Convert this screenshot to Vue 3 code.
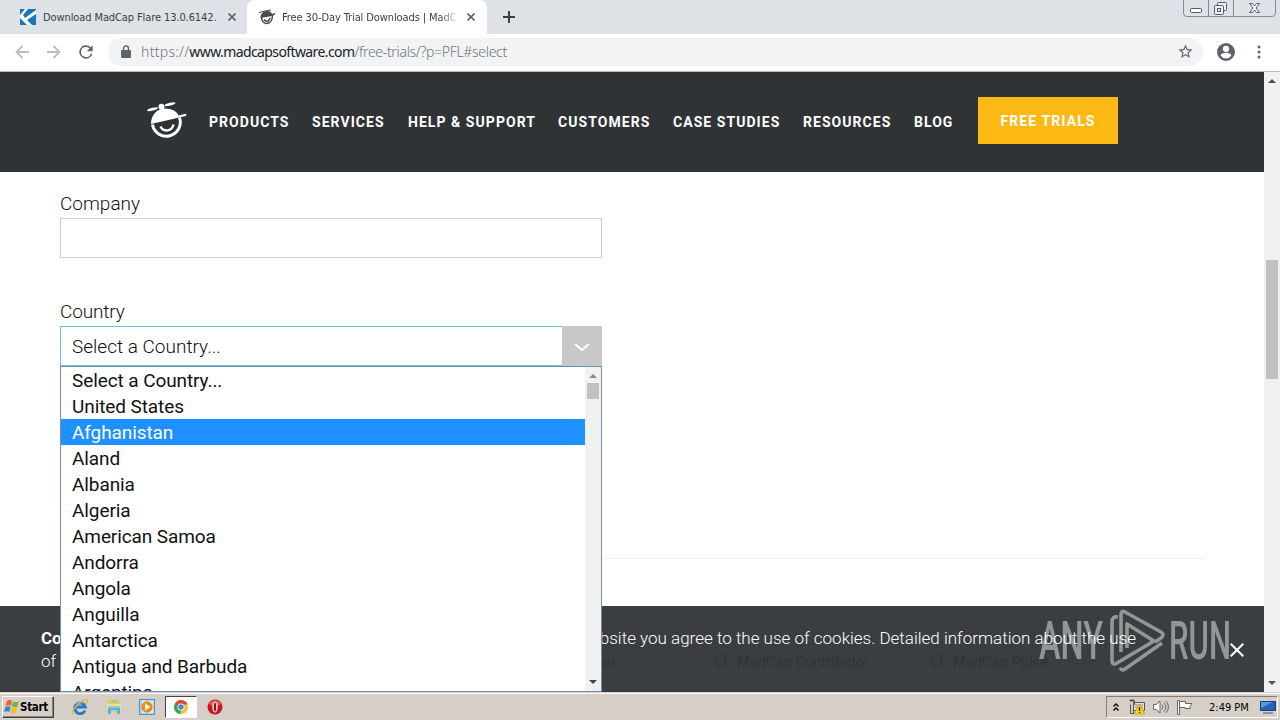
<script setup>
import { ref } from 'vue'

const navItems = [
  { text: 'PRODUCTS', width: 103 },
  { text: 'SERVICES', width: 96 },
  { text: 'HELP & SUPPORT', width: 150 },
  { text: 'CUSTOMERS', width: 115 },
  { text: 'CASE STUDIES', width: 130 },
  { text: 'RESOURCES', width: 111 },
  { text: 'BLOG', width: 64 }
]

const countries = [
  'Select a Country...',
  'United States',
  'Afghanistan',
  'Aland',
  'Albania',
  'Algeria',
  'American Samoa',
  'Andorra',
  'Angola',
  'Anguilla',
  'Antarctica',
  'Antigua and Barbuda',
  'Argentina'
]
const hovered = ref('Afghanistan')
const company = ref('')
</script>

<template>
  <div class="screen">
    <!-- tab strip -->
    <div class="tabs">
      <div class="tab tab-first">
        <svg class="favicon" viewBox="0 0 16 16">
          <rect width="16" height="16" fill="#fff"/>
          <path d="M0 0h5L0 6zM8 0h8v1L5 9 3 6zM0 9l7 7H0zM16 5v11h-4l-5-5z" fill="#1679b5"/>
        </svg>
        <span class="tab-title">Download MadCap Flare 13.0.6142.</span>
        <svg class="tab-close" viewBox="0 0 8 8"><path d="M.5.5l7 7M7.5.5l-7 7"/></svg>
      </div>
      <div class="tab tab-active">
        <svg class="favicon" viewBox="0 0 16 16" fill="none" stroke="#4b4b4b">
          <path d="M0 3.500l6-1.500L12 1" stroke-width="1.200"/>
          <path d="M1.500 9C1 1 12 0 13 5l3-1v1.500L13 7z" fill="#4b4b4b" stroke="none"/>
          <path d="M2.500 8c0 9 11 9 11-2M5 10.500c2 3 5 2 6-1.500" stroke-width="1.500"/>
        </svg>
        <span class="tab-title fade">Free 30-Day Trial Downloads | MadC</span>
        <svg class="tab-close" viewBox="0 0 8 8"><path d="M.5.5l7 7M7.5.5l-7 7"/></svg>
      </div>
      <svg class="new-tab" viewBox="0 0 12 12"><path d="M6 0v12M0 6h12"/></svg>
      <svg class="win-buttons" viewBox="0 0 94 18" fill="none" stroke="#85898f">
        <path d="M.5 0v13q0 3.500 3.500 3.500h85q3.500 0 3.500-3.500V0M25.500 0v16M50.500 0v16"/>
        <rect x="7.500" y="8.500" width="11" height="4" rx="1" fill="#fff" stroke="#555a64"/>
        <g stroke="#555a64" fill="#eef0f3">
          <rect x="34.500" y="2.500" width="9" height="8" rx="1"/>
          <rect x="31.500" y="5.500" width="9" height="9" rx="1"/>
          <rect x="34.500" y="8.500" width="3" height="3"/>
        </g>
        <path d="M66.500 3.500h3l2 2.500 2-2.500h3l-3.500 4.500 3.500 4.500h-3l-2-2.500-2 2.500h-3l3.500-4.500z" fill="#fff" stroke="#555a64"/>
      </svg>
    </div>

    <!-- address bar -->
    <div class="toolbar">
      <svg class="tool-icon back" viewBox="0 0 14 14"><path d="M14 7H1.500M7.500 1l-6 6 6 6"/></svg>
      <svg class="tool-icon forward" viewBox="0 0 14 14"><path d="M0 7h12.500M6.500 1l6 6-6 6"/></svg>
      <svg class="tool-icon reload" viewBox="0 0 24 24">
        <path d="M17.650 6.350A8 8 0 1 0 19.730 14h-2.080A6 6 0 1 1 12 6c1.660 0 3.140.690 4.220 1.780L13 11h7V4z"/>
      </svg>
      <div class="omnibox">
        <svg class="lock" viewBox="0 0 10 13">
          <rect y="5" width="10" height="8" rx="1" fill="#5f6368"/>
          <path d="M2.500 5.500V3.500a2.500 2.500 0 0 1 5 0v2" fill="none" stroke="#5f6368" stroke-width="1.400"/>
        </svg>
        <span class="url"><i>https://</i><b>www.madcapsoftware.com</b>/free-trials/?p=PFL#select</span>
        <svg class="star" viewBox="0 0 24 24">
          <path d="M22 9.240l-7.190-.620L12 2 9.190 8.630 2 9.240l5.460 4.730L5.820 21 12 17.270 18.180 21l-1.630-7.030zM12 15.400l-3.760 2.270 1-4.280-3.320-2.880 4.380-.380L12 6.100l1.710 4.040 4.380.380-3.320 2.880 1 4.280z"/>
        </svg>
      </div>
      <svg class="avatar" viewBox="2 2 20 20">
        <path d="M12 2a10 10 0 1 0 0 20 10 10 0 0 0 0-20zm0 3a3.500 3.500 0 1 1 0 7 3.500 3.500 0 0 1 0-7zm0 14.200a7.200 7.200 0 0 1-6-3.220c.03-1.990 4-3.080 6-3.080s5.970 1.090 6 3.080a7.200 7.200 0 0 1-6 3.220z"/>
      </svg>
      <svg class="menu" viewBox="0 0 4 14"><circle cx="2" cy="2" r="1.500"/><circle cx="2" cy="7" r="1.500"/><circle cx="2" cy="12" r="1.500"/></svg>
    </div>

    <!-- page -->
    <div class="viewport">
      <div class="page">
        <header class="site-header">
          <svg class="logo" viewBox="0 0 40 38">
            <g fill="#fff">
              <ellipse cx="5.500" cy="7.200" rx="5.500" ry="1.400" transform="rotate(-14 5.500 7.200)"/>
              <ellipse cx="23" cy="2.200" rx="5.500" ry="1.400" transform="rotate(-14 23 2.200)"/>
              <circle cx="14.500" cy="4.800" r="3"/>
              <path d="M4 22C4 13 10 6.700 18 6.500c7 0 12 3 13.500 7l7-1.700q1.700.5.300 2.200z"/>
            </g>
            <g fill="none" stroke="#fff">
              <path d="M5.500 22.500a14 14 0 1 0 27-7" stroke-width="3"/>
              <path d="M13.500 24.500c3 6 11.500 5 13-2" stroke-width="2.400"/>
            </g>
          </svg>
          <nav>
            <a v-for="item in navItems" :key="item.text" :style="{ width: item.width + 'px' }">{{ item.text }}</a>
          </nav>
          <a class="trial">FREE TRIALS</a>
        </header>

        <main class="form">
          <label>Company</label>
          <input v-model="company" type="text">
          <label class="second">Country</label>
          <div class="select">
            <span>Select a Country...</span>
            <i><svg viewBox="0 0 16 8"><path d="M1 1l7 6 7-6"/></svg></i>
          </div>
          <hr>
          <div class="products">
            <span class="lingo">MadCap Lingo</span>
            <span class="radio contributor"><i></i>MadCap Contributor</span>
            <span class="radio"><i></i>MadCap Pulse</span>
          </div>
        </main>

        <div class="cookies">
          <p><b>Cookies</b> <span>website you agree to the use of cookies. Detailed information about the use</span></p>
          <p>of</p>
          <svg class="cookie-close" viewBox="0 0 14 14"><path d="M.7.7l12.600 12.600M13.300.7L.7 13.300"/></svg>
        </div>

        <div class="dropdown">
          <ul>
            <li v-for="country in countries" :key="country" :class="{ hovered: country === hovered }" @mouseenter="hovered = country">{{ country }}</li>
          </ul>
          <div class="list-scroll">
            <svg viewBox="0 0 8 4"><path d="M0 4l4-4 4 4z" fill="#8b8b8b"/></svg>
            <div class="list-thumb"></div>
            <svg class="down" viewBox="0 0 8 4"><path d="M0 0l4 4 4-4z" fill="#444"/></svg>
          </div>
        </div>

        <svg class="watermark" viewBox="0 0 196 64">
          <g fill="#fff" font-family="'Roboto', sans-serif" font-size="53" font-weight="500">
            <text x="0" y="49.500" textLength="64" lengthAdjust="spacingAndGlyphs">ANY</text>
            <text x="130" y="49.500" textLength="62" lengthAdjust="spacingAndGlyphs">RUN</text>
          </g>
          <g fill="none" stroke="#fff" stroke-width="3.600" stroke-linejoin="round">
            <path d="M79 8q-6-1-6 5v38q0 6 5 3l37-22L88 15v24"/>
            <path d="M82 43V6q0-5 4-3l36 20q4 3 0 6l-6 4"/>
            <path d="M123 34L86 60q-3 2-5-1"/>
          </g>
        </svg>
      </div>
      <div class="page-scroll">
        <svg viewBox="0 0 8 4"><path d="M0 4l4-4 4 4z" fill="#505050"/></svg>
        <div class="page-thumb"></div>
        <svg class="down" viewBox="0 0 8 4"><path d="M0 0l4 4 4-4z" fill="#505050"/></svg>
      </div>
    </div>

    <!-- taskbar -->
    <footer class="taskbar">
      <button class="start">
        <svg viewBox="0 0 16 16">
          <path d="M3 2q3-2 5 0L7 7Q4 5 1.500 7z" fill="#e8622c"/>
          <path d="M9 2.500q3 1.500 6-.5l-1.500 5.500q-3 1.500-5.500 0z" fill="#78b532"/>
          <path d="M1.300 8Q4 6.500 6.700 8l-1.500 5Q3 11.500 0 13z" fill="#3a86d4"/>
          <path d="M7.700 8.500q3 1.500 5.500 0L11.800 13.500q-3 2-5.500 0z" fill="#f3bd21"/>
        </svg>
        Start
      </button>
      <div class="quick">
        <svg viewBox="0 0 16 16" fill="none">
          <path d="M13 11.500A5.300 5.300 0 1 1 13.300 8H4" stroke="#1f7fcb" stroke-width="3"/>
          <path d="M4 5.500q4-4 7-1" stroke="#73c8ee"/>
          <path d="M1 15C-2 11 12-1 15.500 1q1 1-1.500 4" stroke="#e5b72c" stroke-width="1.300"/>
        </svg>
      </div>
      <div class="quick">
        <svg viewBox="0 0 16 16">
          <path d="M1 3l1-2h4l1 2h7v10H1z" fill="#e8cb68"/>
          <path d="M5 1h7v3H5z" fill="#a9cf80"/>
          <path d="M1 5h14v6H1z" fill="#f5e08a"/>
          <path d="M2 15V9q0-2 2-2h8q2 0 2 2v6h-3v-4H5v4z" fill="#58b3e0"/>
          <path d="M3 8h10" stroke="#b8e5f6"/>
        </svg>
      </div>
      <div class="quick">
        <svg viewBox="0 0 16 16">
          <rect x=".5" y=".5" width="15" height="15" fill="#a9d5ef" stroke="#5191c1"/>
          <rect x="3" y="2" width="11" height="12" fill="#d6effb"/>
          <circle cx="8" cy="8" r="5.700" fill="#f28a15"/>
          <path d="M6 4.500v7L11.500 8z" fill="#fff"/>
        </svg>
      </div>
      <div class="quick running">
        <svg viewBox="0 0 16 16">
          <circle cx="8" cy="8" r="7" fill="#f0c22c"/>
          <path d="M8 8L1.900 4.500A7 7 0 0 0 7.500 15z" fill="#35a853"/>
          <path d="M2 4.500A7 7 0 0 1 14.500 5.500H8L5.500 9z" fill="#df4637"/>
          <circle cx="8" cy="8" r="3.500" fill="#fff"/>
          <circle cx="8" cy="8" r="2.700" fill="#4385ec"/>
        </svg>
      </div>
      <div class="quick">
        <svg viewBox="0 0 16 16">
          <circle cx="8" cy="8" r="7.500" fill="#c7151c"/>
          <path d="M2 5a7 7 0 0 1 12 0q-6 4-12 0z" fill="#e8615f"/>
          <ellipse cx="8" cy="8" rx="2.700" ry="5.500" fill="#f4d9d7"/>
          <ellipse cx="8" cy="8" rx="1.100" ry="4.500" fill="#8f1014"/>
        </svg>
      </div>
      <div class="tray">
        <svg class="chevrons" viewBox="0 0 6 8" fill="none" stroke="#000" stroke-width="1.300"><path d="M.5 3.500L3 1l2.500 2.500M.5 7.500L3 5l2.500 2.500"/></svg>
        <svg class="net" viewBox="0 0 16 16">
          <path d="M4.500 3.500h11v8h-11z" fill="#e4e4df" stroke="#555"/>
          <path d="M6 5h8v5H6z" fill="#b8b8b0"/>
          <path d="M.5 1.500h5v4h-1v9M1.500 5.500v9h5M2 0v3M4 0v3" fill="none" stroke="#555"/>
          <path d="M10.500 5L16 15H5z" fill="#f5d20a" stroke="#c79a00" stroke-width=".6"/>
          <path d="M10.500 8v4M10.500 13v1" stroke="#222" stroke-width="1.200"/>
        </svg>
        <svg class="sound" viewBox="0 0 16 14" fill="none" stroke="#6a6a6a">
          <path d="M.5 4.500h2.500L7 1v12L3 9.500H.5z" fill="#fff"/>
          <path d="M9 4.500q2 2.500 0 5M11 2.500q4 4.500 0 9M13 1q5 6 0 12"/>
        </svg>
        <svg class="flag" viewBox="0 0 16 15" fill="#fff" stroke="#666">
          <path d="M.5.5h2v14h-2z"/><path d="M2.500 1.500h6v2h6.500l-2 3 0 2h-5v-1H2.500z"/>
        </svg>
        <span class="clock">2:49 PM</span>
        <svg class="monitor" viewBox="0 0 16 13">
          <path d="M.5.5h15v9H.5z" fill="#2364b9" stroke="#173f79"/>
          <path d="M1 1h12L1 7z" fill="#5799de"/>
          <path d="M3 12h10" stroke="#6c8199" stroke-width="1.500"/>
        </svg>
      </div>
    </footer>
  </div>
</template>

<style>
body {
  overflow: hidden;
}
</style>

<style scoped>
* {
  box-sizing: border-box;
}

.screen {
  width: 1280px;
  height: 720px;
  display: flex;
  flex-direction: column;
  overflow: hidden;
  background: #fff;
  font-family: Roboto, sans-serif;
}

svg {
  display: block;
  flex-shrink: 0;
}

/* tab strip */
.tabs {
  display: flex;
  height: 34px;
  background: #dee1e6;
  font: 11px "DejaVu Sans Condensed", "DejaVu Sans", sans-serif;
  font-stretch: condensed;
  color: #3c4043;
}

.tab {
  display: flex;
  align-items: center;
  height: 34px;
}

.tab-first {
  width: 247px;
  padding-left: 20px;
}

.tab-active {
  width: 240px;
  padding-left: 12px;
  background: #fff;
  border-radius: 8px 8px 0 0;
}

.favicon {
  width: 16px;
  height: 16px;
}

.tab-title {
  width: 177px;
  margin: 0 8px 0 7px;
  white-space: nowrap;
  overflow: hidden;
  letter-spacing: -0.1px;
}

.fade {
  mask-image: linear-gradient(90deg, #000 158px, transparent 177px);
}

.tab-close {
  width: 8px;
  height: 8px;
  stroke: #5f6368;
  stroke-width: 1.6;
}

.new-tab {
  width: 12px;
  height: 12px;
  margin: 11px 0 0 16px;
  stroke: #3c4043;
  stroke-width: 2;
}

.win-buttons {
  width: 94px;
  height: 18px;
  margin: 0 3px 0 auto;
}

/* address bar */
.toolbar {
  display: flex;
  align-items: center;
  height: 38px;
  padding: 0 18px 2px 15px;
  border-bottom: 1px solid #b9bbbe;
}

.tool-icon {
  width: 14px;
  height: 14px;
  fill: none;
  stroke: #babcbe;
  stroke-width: 1.8;
}

.forward {
  margin-left: 18px;
}

.tool-icon.reload {
  width: 20px;
  height: 20px;
  margin-left: 15px;
  fill: #5f6368;
  stroke: none;
}

.omnibox {
  display: flex;
  align-items: center;
  width: 1095px;
  height: 28px;
  margin-left: 12px;
  padding: 0 9px 0 13px;
  border-radius: 14px;
  background: #f1f3f4;
}

.lock {
  width: 10px;
  height: 13px;
}

.url {
  margin-left: 10px;
  font: 300 14px "Noto Sans", sans-serif;
  letter-spacing: -0.32px;
  color: #6f757a;
}

.url i {
  font-style: normal;
  letter-spacing: 0.3px;
}

.url b {
  font-weight: 400;
  letter-spacing: -0.6px;
  color: #202124;
}

.star {
  width: 17px;
  height: 17px;
  margin-left: auto;
  fill: #5f6368;
}

.avatar {
  width: 18px;
  height: 18px;
  margin-left: 14px;
  fill: #5f6368;
}

.menu {
  width: 4px;
  height: 14px;
  margin-left: 22px;
  fill: #5f6368;
}

/* page */
.viewport {
  display: flex;
  height: 620px;
}

.page {
  position: relative;
  width: 1264px;
  height: 620px;
  overflow: hidden;
}

.site-header {
  display: flex;
  align-items: center;
  height: 100px;
  padding-left: 147px;
  background: #2f3336;
  color: #fff;
  font-size: 14px;
  font-weight: 700;
}

.logo {
  width: 40px;
  height: 38px;
  margin-top: -2px;
}

nav {
  display: flex;
  margin-left: 22px;
  letter-spacing: 1.05px;
}

nav a {
  white-space: nowrap;
}

.trial {
  width: 140px;
  height: 47px;
  margin: -3px 0 0 0;
  background: #fdb913;
  line-height: 48px;
  text-align: center;
  letter-spacing: 1.1px;
}

.form {
  display: flex;
  flex-direction: column;
  padding: 17px 59px 0 60px;
  font-size: 19px;
  font-weight: 300;
  color: #111;
}

.form label {
  height: 29px;
  line-height: 30px;
}

.form .second {
  margin-top: 39px;
  letter-spacing: -0.15px;
}

.form input {
  width: 542px;
  height: 40px;
  border: 1px solid #ccc;
  outline: none;
}

.select {
  display: flex;
  justify-content: space-between;
  width: 542px;
  height: 40px;
  padding-left: 11px;
  border: 1px solid #67c5c5;
  border-right: none;
  line-height: 40px;
}

.select i {
  display: flex;
  align-items: center;
  justify-content: center;
  width: 40px;
  height: 40px;
  margin-top: -1px;
  background: #c8c8c8;
}

.select i svg {
  width: 16px;
  height: 8px;
  margin-top: 2px;
  fill: none;
  stroke: #fff;
  stroke-width: 2;
}

hr {
  width: 100%;
  height: 1px;
  margin: 192px 0 0;
  border: none;
  background: #eee;
}

.products {
  display: flex;
  align-items: center;
  margin-top: 91px;
  height: 24px;
  font-size: 14.7px;
  font-weight: 400;
  color: #000;
  opacity: 0.75;
}

.lingo {
  width: 555px;
  text-align: right;
}

.radio {
  display: flex;
  align-items: center;
  white-space: nowrap;
}

.radio i {
  width: 13px;
  height: 13px;
  margin: -3px 10px 0 0;
  border: 2px solid #555;
  border-radius: 50%;
}

.contributor {
  width: 216px;
  margin-left: 99px;
}

.cookies {
  position: absolute;
  left: 0;
  right: 0;
  bottom: 0;
  height: 86px;
  padding: 21px 0 0 41px;
  background: rgba(47, 51, 54, 0.945);
  color: #fff;
  font-size: 17px;
  font-weight: 300;
  line-height: 23px;
}

.cookies p {
  display: flex;
  justify-content: space-between;
  width: 1095px;
  margin: 0;
  white-space: nowrap;
}

.cookies b {
  font-weight: 700;
}

.cookie-close {
  position: absolute;
  left: 1230px;
  top: 37px;
  width: 14px;
  height: 14px;
  stroke: #fff;
  stroke-width: 2;
}

.dropdown {
  position: absolute;
  left: 60px;
  top: 294px;
  display: flex;
  width: 542px;
  height: 326px;
  border: 1px solid #6d91b5;
  background: #fff;
  overflow: hidden;
}

.dropdown ul {
  flex: 1;
  margin: 0;
  padding: 0;
  list-style: none;
  font-size: 19px;
  letter-spacing: -0.09px;
  color: #111;
}

.dropdown li {
  height: 26px;
  padding-left: 11px;
  line-height: 28px;
}

.dropdown .hovered {
  background: #1e90ff;
  color: #fff;
}

.list-scroll,
.page-scroll {
  display: flex;
  flex-direction: column;
  align-items: center;
  width: 16px;
  padding: 7px 0;
  background: #f1f1f1;
}

.list-scroll svg,
.page-scroll svg {
  width: 8px;
  height: 4px;
}

.list-scroll .down,
.page-scroll .down {
  margin-top: auto;
}

.list-thumb {
  width: 12px;
  height: 16px;
  margin-top: 5px;
  background: #c1c1c1;
}

.page-thumb {
  width: 12px;
  height: 119px;
  margin-top: 177px;
  background: #c1c1c1;
}

.watermark {
  position: absolute;
  left: 1039px;
  top: 537px;
  width: 196px;
  height: 64px;
  opacity: 0.45;
}

/* taskbar */
.taskbar {
  display: flex;
  height: 28px;
  padding-top: 3px;
  border-top: 1px solid #d5cfc7;
  box-shadow: inset 0 1px #fff;
  background: #d5cfc7;
  font-family: "DejaVu Sans Condensed", "DejaVu Sans", sans-serif;
  font-stretch: condensed;
}

.start {
  display: flex;
  align-items: center;
  width: 52px;
  height: 22px;
  margin: 0 10px 0 2px;
  padding: 0 1px;
  border: 1px solid;
  border-color: #fff #444 #444 #fff;
  box-shadow: inset -1px -1px #8a857d;
  background: #d5cfc7;
  color: #000;
  font: bold 11.5px "DejaVu Sans Condensed", "DejaVu Sans", sans-serif;
  font-stretch: condensed;
  letter-spacing: -0.3px;
}

.start svg {
  width: 16px;
  height: 16px;
}

.quick {
  display: flex;
  align-items: center;
  justify-content: center;
  width: 32px;
  height: 22px;
  margin-right: 1.7px;
}

.quick svg {
  width: 16px;
  height: 16px;
}

.running {
  border: 1px solid;
  border-color: #444 #fff #fff #444;
  background: #fff;
}

.tray {
  display: flex;
  align-items: center;
  width: 172px;
  height: 22px;
  margin: 0 2px 0 auto;
  padding-left: 6px;
  border: 1px solid;
  border-color: #827d76 #fff #fff #827d76;
}

.chevrons {
  width: 6px;
  height: 8px;
}

.net {
  width: 16px;
  height: 16px;
  margin-left: 10px;
}

.sound {
  width: 16px;
  height: 14px;
  margin-left: 8px;
}

.flag {
  width: 16px;
  height: 15px;
  margin-left: 8px;
}

.clock {
  width: 51px;
  margin-left: 16px;
  font-size: 11px;
  color: #000;
  white-space: nowrap;
}

.monitor {
  width: 16px;
  height: 13px;
}
</style>
